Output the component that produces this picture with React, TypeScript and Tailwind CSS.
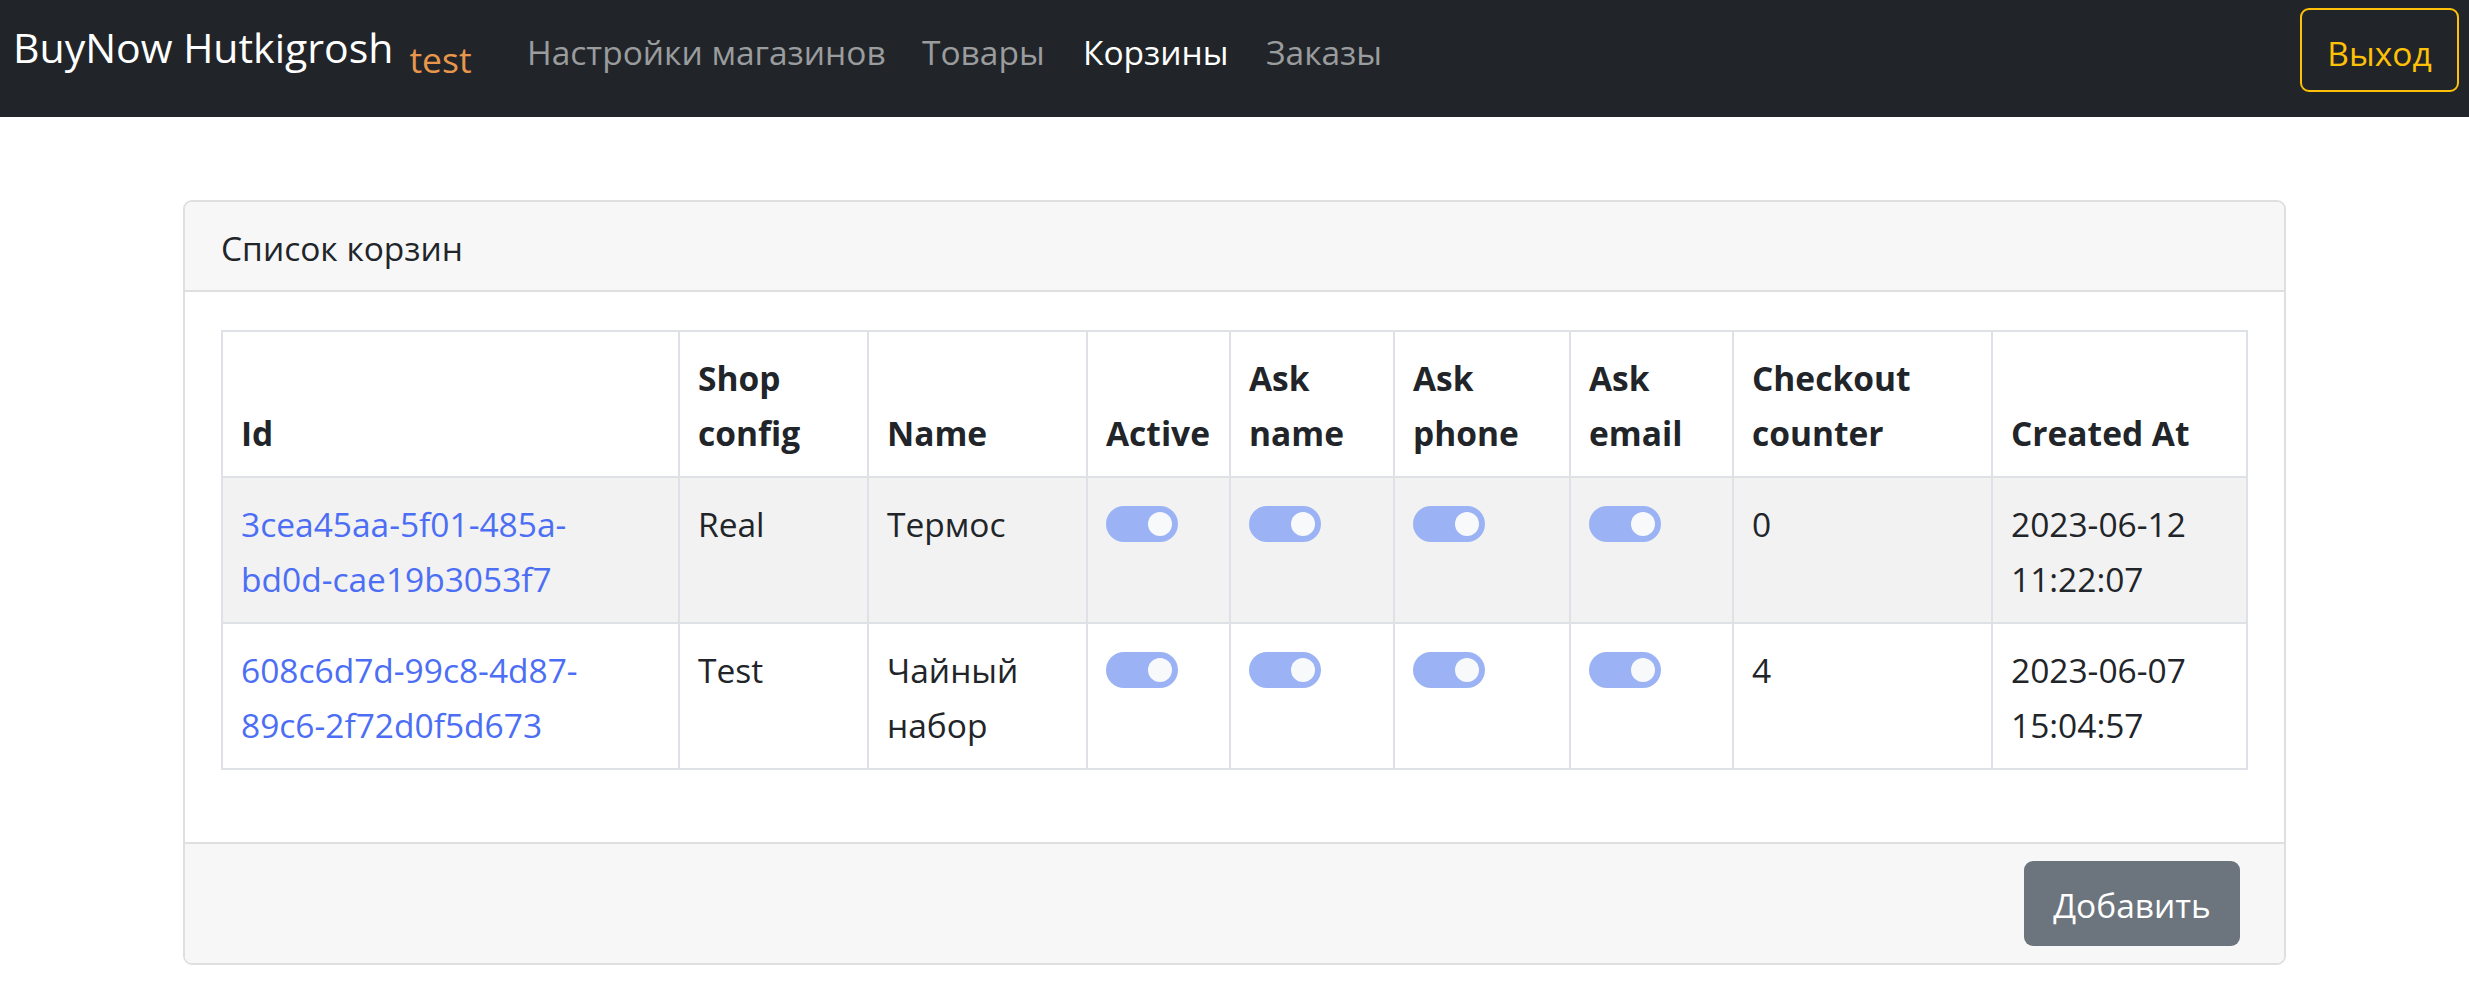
import React from "react";

const Toggle = () => (
  <div className="flex items-center h-[55px] -mt-[1px]">
    <span className="w-[72px] h-[36px] rounded-full bg-[#9bb3f5] flex items-center justify-end pr-[6px]">
      <span className="w-[24px] h-[24px] rounded-full bg-[#f8f9fa]" />
    </span>
  </div>
);

type Row = {
  id: [string, string];
  shop: string;
  name: React.ReactNode;
  counter: string;
  date: string;
  time: string;
};

const rows: Row[] = [
  {
    id: ["3cea45aa-5f01-485a-", "bd0d-cae19b3053f7"],
    shop: "Real",
    name: "Термос",
    counter: "0",
    date: "2023-06-12",
    time: "11:22:07",
  },
  {
    id: ["608c6d7d-99c8-4d87-", "89c6-2f72d0f5d673"],
    shop: "Test",
    name: (
      <>
        Чайный
        <br />
        набор
      </>
    ),
    counter: "4",
    date: "2023-06-07",
    time: "15:04:57",
  },
];

const th =
  "border-2 border-[#dee2e6] px-[18px] pt-[19px] pb-[15px] leading-[55px] align-bottom text-left font-bold whitespace-nowrap";
const td =
  "border-2 border-[#dee2e6] px-[18px] pt-[19px] pb-[15px] leading-[55px] align-top text-left whitespace-nowrap";

export default function App() {
  return (
    <div className="min-h-screen bg-white font-['Open_Sans',sans-serif] text-[#212529] text-[33.5px]">
      <nav className="h-[117px] bg-[#212529] flex items-start">
        <div className="w-[509px] pl-[13px] mt-[19px] leading-[56px] text-[41px] text-white whitespace-nowrap">
          BuyNow Hutkigrosh
          <span className="ml-[16px] text-[35.5px] text-[#e8964b] align-[-10px]">test</span>
        </div>
        <a className="mt-[25px] w-[395px] px-[18px] leading-[55px] text-[33.5px] text-[#9a9c9e] whitespace-nowrap">
          Настройки магазинов
        </a>
        <a className="mt-[25px] w-[161px] px-[18px] leading-[55px] text-[33.5px] text-[#9a9c9e] whitespace-nowrap">
          Товары
        </a>
        <a className="mt-[25px] w-[183px] px-[18px] leading-[55px] text-[33.5px] text-white whitespace-nowrap">
          Корзины
        </a>
        <a className="mt-[25px] w-[149px] px-[18px] leading-[55px] text-[33.5px] text-[#9a9c9e] whitespace-nowrap">
          Заказы
        </a>
        <button className="ml-auto mr-[10px] mt-[8px] w-[159px] h-[84px] border-2 border-[#ffc107] rounded-[9px] text-[#ffc107] text-[33.5px] leading-[55px] flex items-center justify-center pt-[6px]">
          Выход
        </button>
      </nav>

      <div className="pt-[83px]">
        <div className="w-[2103px] mx-auto border-2 border-[#dfdfdf] rounded-[9px] overflow-hidden">
          <div className="bg-[#f7f7f7] border-b-2 border-[#dfdfdf] px-[36px] pt-[18.5px] pb-[14.5px] leading-[55px]">
            Список корзин
          </div>
          <div className="bg-white pt-[38px] px-[36px] pb-[72px]">
            <table className="w-full table-fixed border-collapse">
              <colgroup>
                <col className="w-[457px]" />
                <col className="w-[189px]" />
                <col className="w-[219px]" />
                <col className="w-[143px]" />
                <col className="w-[164px]" />
                <col className="w-[176px]" />
                <col className="w-[163px]" />
                <col className="w-[259px]" />
                <col />
              </colgroup>
              <thead>
                <tr className="bg-white">
                  <th className={th}>Id</th>
                  <th className={th}>
                    Shop
                    <br />
                    config
                  </th>
                  <th className={th}>Name</th>
                  <th className={th}>Active</th>
                  <th className={th}>
                    Ask
                    <br />
                    name
                  </th>
                  <th className={th}>
                    Ask
                    <br />
                    phone
                  </th>
                  <th className={th}>
                    Ask
                    <br />
                    email
                  </th>
                  <th className={th}>
                    Checkout
                    <br />
                    counter
                  </th>
                  <th className={th}>Created At</th>
                </tr>
              </thead>
              <tbody>
                {rows.map((r, i) => (
                  <tr key={i} className={i === 0 ? "bg-[#f2f2f2]" : "bg-white"}>
                    <td className={td}>
                      <a className="text-[#4c6ef5]">
                        {r.id[0]}
                        <br />
                        {r.id[1]}
                      </a>
                    </td>
                    <td className={td}>{r.shop}</td>
                    <td className={td}>{r.name}</td>
                    <td className={td}>
                      <Toggle />
                    </td>
                    <td className={td}>
                      <Toggle />
                    </td>
                    <td className={td}>
                      <Toggle />
                    </td>
                    <td className={td}>
                      <Toggle />
                    </td>
                    <td className={td}>{r.counter}</td>
                    <td className={td}>
                      {r.date}
                      <br />
                      {r.time}
                    </td>
                  </tr>
                ))}
              </tbody>
            </table>
          </div>
          <div className="bg-[#f7f7f7] border-t-2 border-[#dfdfdf] pt-[17px] pb-[17px] pr-[44px] flex justify-end">
            <button className="w-[216px] h-[85px] rounded-[9px] bg-[#6c757d] text-white leading-[55px] flex items-center justify-center pt-[4px]">
              Добавить
            </button>
          </div>
        </div>
      </div>
    </div>
  );
}
